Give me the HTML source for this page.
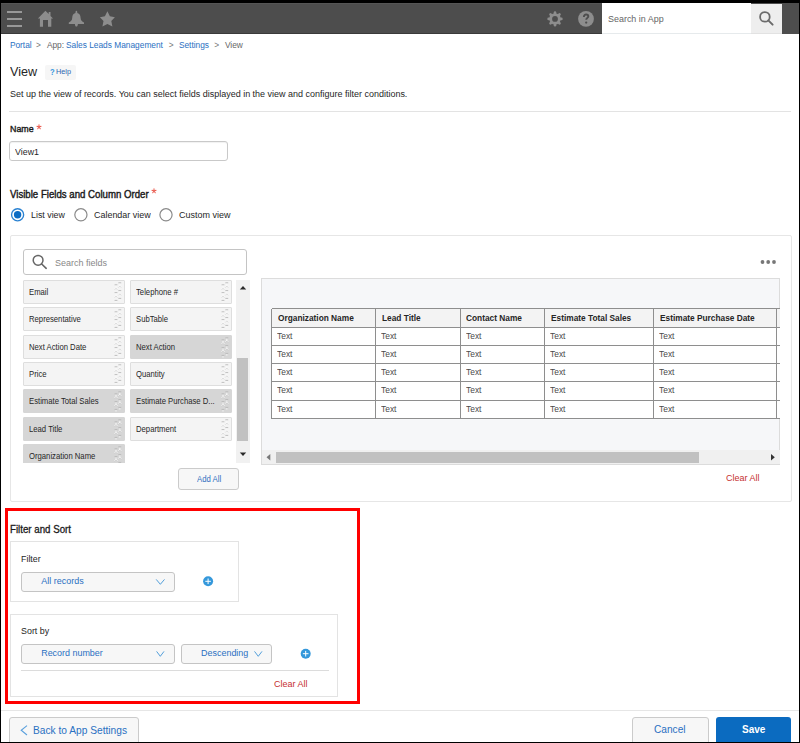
<!DOCTYPE html>
<html><head><meta charset="utf-8"><style>
html,body{margin:0;padding:0;}
body{width:800px;height:743px;position:relative;overflow:hidden;background:#fff;font-family:"Liberation Sans",sans-serif;}
.b{position:absolute;box-sizing:border-box;}
.t{position:absolute;white-space:pre;line-height:1;}
</style></head><body>
<div class="b" style="left:0px;top:0px;width:800px;height:34px;background:#4d4d4d;"></div>
<div class="b" style="left:0px;top:33px;width:602px;height:1px;background:#3a3a3a;"></div>
<div class="b" style="left:0px;top:3px;width:602px;height:1px;background:#555;"></div>
<div class="b" style="left:7px;top:11px;width:15px;height:2px;background:#989898;"></div>
<div class="b" style="left:7px;top:18px;width:15px;height:2px;background:#989898;"></div>
<div class="b" style="left:7px;top:25px;width:15px;height:2px;background:#989898;"></div>
<div class="b" style="left:602px;top:3px;width:149px;height:31px;background:#fff;"></div>
<div class="b" style="left:602px;top:33px;width:149px;height:1px;background:#e6eaec;"></div>
<div class="b" style="left:751px;top:4px;width:31px;height:30px;background:#eeeeee;"></div>
<div class="b" style="left:751px;top:33px;width:31px;height:1px;background:#e2e2e2;"></div>
<svg class="b" style="left:0;top:0" width="800" height="40" viewBox="0 0 800 40">
<path fill="#8d8d8d" d="M45.4 10.8 L37.9 18.5 L39.9 18.5 L39.9 26.8 L43 26.8 L43 19.9 L48 19.9 L48 26.8 L51.3 26.8 L51.3 18.5 L53.1 18.5 L50.5 15.9 L50.5 11.9 L48.7 11.9 L48.7 14.1 Z"/>
<path fill="#8d8d8d" d="M76.4 10.8 C77.2 10.8 77.4 11.8 77.3 13.1 C79.8 13.6 80.5 15.5 80.6 18 C80.8 20.5 82 21.6 84 22.6 L84 24 L68.8 24 L68.8 22.6 C70.8 21.6 72 20.5 72.2 18 C72.3 15.5 73 13.6 75.5 13.1 C75.4 11.8 75.6 10.8 76.4 10.8 Z M74.9 24 L77.9 24 C77.8 25.6 77.2 26.6 76.4 26.6 C75.6 26.6 75 25.6 74.9 24 Z"/>
<path fill="#8d8d8d" d="M107.4 11.2 L109.9 16.2 L114.9 17.3 L111.3 20.9 L112.4 26.4 L107.4 24.1 L102.4 26.4 L103.5 20.9 L99.9 17.3 L104.9 16.2 Z"/>
<g fill="#8d8d8d" transform="translate(555 18.9)">
<circle r="5.7"/>
<g stroke="#8d8d8d" stroke-width="2.6" stroke-linecap="round">
<line x1="0" y1="-6.4" x2="0" y2="6.4"/><line x1="-6.4" y1="0" x2="6.4" y2="0"/>
<line x1="-4.5" y1="-4.5" x2="4.5" y2="4.5"/><line x1="-4.5" y1="4.5" x2="4.5" y2="-4.5"/>
</g>
<circle r="2.9" fill="#4d4d4d"/>
</g>
<circle cx="586" cy="18.95" r="7.9" fill="#8d8d8d"/>
<path d="M583.9 16.9 C583.9 15.3 584.9 14.5 586.1 14.5 C587.4 14.5 588.3 15.3 588.3 16.4 C588.3 17.8 586.2 18 586.2 19.8" fill="none" stroke="#4d4d4d" stroke-width="1.9"/>
<circle cx="586.2" cy="22.6" r="1.15" fill="#4d4d4d"/>
<circle cx="764.9" cy="16.9" r="4.8" fill="none" stroke="#6b6b6b" stroke-width="1.8"/>
<line x1="768.3" y1="20.4" x2="772.6" y2="24.6" stroke="#6b6b6b" stroke-width="2" stroke-linecap="round"/>
</svg>
<span class="t" style="left:607.80px;top:14.08px;font-size:9.944px;color:#666;transform:scaleX(0.9);transform-origin:0 0;">Search in App</span>
<span class="t" style="left:9.90px;top:41.03px;font-size:8.350px;color:#2a70c2;">Portal</span>
<span class="t" style="left:36.00px;top:41.03px;font-size:8.350px;color:#777;">&gt;</span>
<span class="t" style="left:46.90px;top:41.03px;font-size:8.350px;color:#666;">App:</span>
<span class="t" style="left:66.00px;top:41.03px;font-size:8.350px;color:#2a70c2;">Sales Leads Management</span>
<span class="t" style="left:168.80px;top:41.03px;font-size:8.350px;color:#777;">&gt;</span>
<span class="t" style="left:178.90px;top:41.03px;font-size:8.350px;color:#2a70c2;">Settings</span>
<span class="t" style="left:214.30px;top:41.03px;font-size:8.350px;color:#777;">&gt;</span>
<span class="t" style="left:224.90px;top:41.03px;font-size:8.350px;color:#666;">View</span>
<span class="t" style="left:9.80px;top:65.15px;font-size:13.404px;color:#262626;transform:scaleX(0.94);transform-origin:0 0;">View</span>
<div class="b" style="left:45px;top:65px;width:31px;height:14.5px;background:#f6f6f6;border-radius:2px;"></div>
<span class="t" style="left:49.60px;top:68.33px;font-size:8.941px;color:#3a9ae0;font-weight:bold;transform:scaleX(0.85);transform-origin:0 0;">?</span>
<span class="t" style="left:56.00px;top:67.79px;font-size:7.684px;color:#2b65b0;transform:scaleX(0.95);transform-origin:0 0;">Help</span>
<span class="t" style="left:10.00px;top:88.98px;font-size:9.463px;color:#262626;transform:scaleX(0.95);transform-origin:0 0;">Set up the view of records. You can select fields displayed in the view and configure filter conditions.</span>
<div class="b" style="left:9px;top:111px;width:782px;height:1px;background:#e3e3e3;"></div>
<span class="t" style="left:10.10px;top:123.57px;font-size:9.833px;color:#1a1a1a;transform:scaleX(0.9);transform-origin:0 0;-webkit-text-stroke:0.4px #1a1a1a;">Name</span>
<svg class="b" style="left:35px;top:122.5px" width="8" height="8" viewBox="35 122.5 8 8"><path d="M39.00 126.50 L39.00 124.35 M39.00 126.50 L41.04 125.84 M39.00 126.50 L40.26 128.24 M39.00 126.50 L37.74 128.24 M39.00 126.50 L36.96 125.84 " stroke="#ea5a4e" stroke-width="1.05" stroke-linecap="round" fill="none"/></svg>
<div class="b" style="left:9px;top:141px;width:219px;height:20px;background:#fff;border:1px solid #c9c9c9;border-radius:3px;box-shadow:inset 0 1px 1px rgba(0,0,0,.06);"></div>
<span class="t" style="left:15.00px;top:147.03px;font-size:9.641px;color:#262626;transform:scaleX(0.92);transform-origin:0 0;">View1</span>
<span class="t" style="left:9.80px;top:189.89px;font-size:10.052px;color:#1a1a1a;transform:scaleX(0.96);transform-origin:0 0;-webkit-text-stroke:0.4px #1a1a1a;">Visible Fields and Column Order</span>
<svg class="b" style="left:149.75px;top:186.9px" width="8" height="8" viewBox="149.75 186.9 8 8"><path d="M153.75 190.90 L153.75 188.75 M153.75 190.90 L155.79 190.24 M153.75 190.90 L155.01 192.64 M153.75 190.90 L152.49 192.64 M153.75 190.90 L151.71 190.24 " stroke="#ea5a4e" stroke-width="1.05" stroke-linecap="round" fill="none"/></svg>
<svg class="b" style="left:0;top:200px" width="240" height="30" viewBox="0 200 240 30">
<circle cx="17.6" cy="214.8" r="6.05" fill="none" stroke="#2a82d2" stroke-width="1.35"/>
<circle cx="17.6" cy="214.8" r="3.7" fill="#0b6cc4"/>
<circle cx="80.9" cy="214.8" r="6.1" fill="none" stroke="#8a8a8a" stroke-width="1.2"/>
<circle cx="166" cy="214.8" r="6.1" fill="none" stroke="#8a8a8a" stroke-width="1.2"/>
</svg>
<span class="t" style="left:30.70px;top:209.73px;font-size:9.527px;color:#262626;transform:scaleX(0.93);transform-origin:0 0;">List view</span>
<span class="t" style="left:93.80px;top:209.66px;font-size:9.613px;color:#262626;transform:scaleX(0.93);transform-origin:0 0;">Calendar view</span>
<span class="t" style="left:178.90px;top:209.59px;font-size:9.688px;color:#262626;transform:scaleX(0.93);transform-origin:0 0;">Custom view</span>
<div class="b" style="left:10px;top:235px;width:782px;height:267px;border:1px solid #e6e6e6;border-radius:2px;background:#fff;"></div>
<div class="b" style="left:23px;top:249px;width:223.7px;height:25.7px;border:1px solid #c4c4c4;border-radius:3px;background:#fff;"></div>
<svg class="b" style="left:20px;top:245px" width="40" height="30" viewBox="20 245 40 30">
<circle cx="38.1" cy="260.3" r="4.9" fill="none" stroke="#666" stroke-width="1.5"/>
<line x1="41.7" y1="264" x2="46.2" y2="268.3" stroke="#666" stroke-width="1.6" stroke-linecap="round"/>
</svg>
<span class="t" style="left:55.00px;top:257.52px;font-size:9.772px;color:#888;transform:scaleX(0.92);transform-origin:0 0;">Search fields</span>
<div class="b" style="left:23px;top:280px;width:210px;height:183px;overflow:hidden">
<div class="b" style="left:0px;top:-0.40px;width:101.5px;height:24px;background:#f4f4f4;border:1px solid #dedede;border-radius:1px;"><svg width="8" height="21" viewBox="0 0 8 21" style="position:absolute;left:90px;top:1px">
<g fill="none" stroke-width="0.9">
<path stroke="#b8b8b8" d="M0.6 2.8 H3.4 M0.6 10.6 H3.4 M0.6 18.4 H3.4 M4.4 0.8 H7.2 M4.4 8.6 H7.2 M4.4 16.4 H7.2"/>
<path stroke="#fbfbfb" d="M0.6 7 L2 5.4 L3.4 7 M0.6 14.8 L2 13.2 L3.4 14.8 M4.4 4.8 L5.8 3.2 L7.2 4.8 M4.4 12.6 L5.8 11 L7.2 12.6"/>
<path stroke="#c8c8c8" d="M0.6 7.8 L2 6.2 L3.4 7.8 M0.6 15.6 L2 14 L3.4 15.6 M4.4 5.6 L5.8 4 L7.2 5.6 M4.4 13.4 L5.8 11.8 L7.2 13.4" stroke-opacity="0.6"/>
</g>
<g fill="#fbfbfb"><rect x="1.4" y="3.8" width="1.2" height="1"/><rect x="1.4" y="11.6" width="1.2" height="1"/><rect x="1.4" y="19.4" width="1.2" height="1"/>
<rect x="5.2" y="1.8" width="1.2" height="1"/><rect x="5.2" y="9.6" width="1.2" height="1"/><rect x="5.2" y="17.4" width="1.2" height="1"/></g>
</svg></div>
<div class="b" style="left:107px;top:-0.40px;width:101.5px;height:24px;background:#f4f4f4;border:1px solid #dedede;border-radius:1px;"><svg width="8" height="21" viewBox="0 0 8 21" style="position:absolute;left:90px;top:1px">
<g fill="none" stroke-width="0.9">
<path stroke="#b8b8b8" d="M0.6 2.8 H3.4 M0.6 10.6 H3.4 M0.6 18.4 H3.4 M4.4 0.8 H7.2 M4.4 8.6 H7.2 M4.4 16.4 H7.2"/>
<path stroke="#fbfbfb" d="M0.6 7 L2 5.4 L3.4 7 M0.6 14.8 L2 13.2 L3.4 14.8 M4.4 4.8 L5.8 3.2 L7.2 4.8 M4.4 12.6 L5.8 11 L7.2 12.6"/>
<path stroke="#c8c8c8" d="M0.6 7.8 L2 6.2 L3.4 7.8 M0.6 15.6 L2 14 L3.4 15.6 M4.4 5.6 L5.8 4 L7.2 5.6 M4.4 13.4 L5.8 11.8 L7.2 13.4" stroke-opacity="0.6"/>
</g>
<g fill="#fbfbfb"><rect x="1.4" y="3.8" width="1.2" height="1"/><rect x="1.4" y="11.6" width="1.2" height="1"/><rect x="1.4" y="19.4" width="1.2" height="1"/>
<rect x="5.2" y="1.8" width="1.2" height="1"/><rect x="5.2" y="9.6" width="1.2" height="1"/><rect x="5.2" y="17.4" width="1.2" height="1"/></g>
</svg></div>
<div class="b" style="left:0px;top:27.05px;width:101.5px;height:24px;background:#f4f4f4;border:1px solid #dedede;border-radius:1px;"><svg width="8" height="21" viewBox="0 0 8 21" style="position:absolute;left:90px;top:1px">
<g fill="none" stroke-width="0.9">
<path stroke="#b8b8b8" d="M0.6 2.8 H3.4 M0.6 10.6 H3.4 M0.6 18.4 H3.4 M4.4 0.8 H7.2 M4.4 8.6 H7.2 M4.4 16.4 H7.2"/>
<path stroke="#fbfbfb" d="M0.6 7 L2 5.4 L3.4 7 M0.6 14.8 L2 13.2 L3.4 14.8 M4.4 4.8 L5.8 3.2 L7.2 4.8 M4.4 12.6 L5.8 11 L7.2 12.6"/>
<path stroke="#c8c8c8" d="M0.6 7.8 L2 6.2 L3.4 7.8 M0.6 15.6 L2 14 L3.4 15.6 M4.4 5.6 L5.8 4 L7.2 5.6 M4.4 13.4 L5.8 11.8 L7.2 13.4" stroke-opacity="0.6"/>
</g>
<g fill="#fbfbfb"><rect x="1.4" y="3.8" width="1.2" height="1"/><rect x="1.4" y="11.6" width="1.2" height="1"/><rect x="1.4" y="19.4" width="1.2" height="1"/>
<rect x="5.2" y="1.8" width="1.2" height="1"/><rect x="5.2" y="9.6" width="1.2" height="1"/><rect x="5.2" y="17.4" width="1.2" height="1"/></g>
</svg></div>
<div class="b" style="left:107px;top:27.05px;width:101.5px;height:24px;background:#f4f4f4;border:1px solid #dedede;border-radius:1px;"><svg width="8" height="21" viewBox="0 0 8 21" style="position:absolute;left:90px;top:1px">
<g fill="none" stroke-width="0.9">
<path stroke="#b8b8b8" d="M0.6 2.8 H3.4 M0.6 10.6 H3.4 M0.6 18.4 H3.4 M4.4 0.8 H7.2 M4.4 8.6 H7.2 M4.4 16.4 H7.2"/>
<path stroke="#fbfbfb" d="M0.6 7 L2 5.4 L3.4 7 M0.6 14.8 L2 13.2 L3.4 14.8 M4.4 4.8 L5.8 3.2 L7.2 4.8 M4.4 12.6 L5.8 11 L7.2 12.6"/>
<path stroke="#c8c8c8" d="M0.6 7.8 L2 6.2 L3.4 7.8 M0.6 15.6 L2 14 L3.4 15.6 M4.4 5.6 L5.8 4 L7.2 5.6 M4.4 13.4 L5.8 11.8 L7.2 13.4" stroke-opacity="0.6"/>
</g>
<g fill="#fbfbfb"><rect x="1.4" y="3.8" width="1.2" height="1"/><rect x="1.4" y="11.6" width="1.2" height="1"/><rect x="1.4" y="19.4" width="1.2" height="1"/>
<rect x="5.2" y="1.8" width="1.2" height="1"/><rect x="5.2" y="9.6" width="1.2" height="1"/><rect x="5.2" y="17.4" width="1.2" height="1"/></g>
</svg></div>
<div class="b" style="left:0px;top:54.50px;width:101.5px;height:24px;background:#f4f4f4;border:1px solid #dedede;border-radius:1px;"><svg width="8" height="21" viewBox="0 0 8 21" style="position:absolute;left:90px;top:1px">
<g fill="none" stroke-width="0.9">
<path stroke="#b8b8b8" d="M0.6 2.8 H3.4 M0.6 10.6 H3.4 M0.6 18.4 H3.4 M4.4 0.8 H7.2 M4.4 8.6 H7.2 M4.4 16.4 H7.2"/>
<path stroke="#fbfbfb" d="M0.6 7 L2 5.4 L3.4 7 M0.6 14.8 L2 13.2 L3.4 14.8 M4.4 4.8 L5.8 3.2 L7.2 4.8 M4.4 12.6 L5.8 11 L7.2 12.6"/>
<path stroke="#c8c8c8" d="M0.6 7.8 L2 6.2 L3.4 7.8 M0.6 15.6 L2 14 L3.4 15.6 M4.4 5.6 L5.8 4 L7.2 5.6 M4.4 13.4 L5.8 11.8 L7.2 13.4" stroke-opacity="0.6"/>
</g>
<g fill="#fbfbfb"><rect x="1.4" y="3.8" width="1.2" height="1"/><rect x="1.4" y="11.6" width="1.2" height="1"/><rect x="1.4" y="19.4" width="1.2" height="1"/>
<rect x="5.2" y="1.8" width="1.2" height="1"/><rect x="5.2" y="9.6" width="1.2" height="1"/><rect x="5.2" y="17.4" width="1.2" height="1"/></g>
</svg></div>
<div class="b" style="left:107px;top:54.50px;width:101.5px;height:24px;background:#d6d6d6;border:1px solid #d6d6d6;border-radius:1px;"><svg width="8" height="21" viewBox="0 0 8 21" style="position:absolute;left:90px;top:1px">
<g fill="none" stroke-width="0.9">
<path stroke="#b8b8b8" d="M0.6 2.8 H3.4 M0.6 10.6 H3.4 M0.6 18.4 H3.4 M4.4 0.8 H7.2 M4.4 8.6 H7.2 M4.4 16.4 H7.2"/>
<path stroke="#fbfbfb" d="M0.6 7 L2 5.4 L3.4 7 M0.6 14.8 L2 13.2 L3.4 14.8 M4.4 4.8 L5.8 3.2 L7.2 4.8 M4.4 12.6 L5.8 11 L7.2 12.6"/>
<path stroke="#c8c8c8" d="M0.6 7.8 L2 6.2 L3.4 7.8 M0.6 15.6 L2 14 L3.4 15.6 M4.4 5.6 L5.8 4 L7.2 5.6 M4.4 13.4 L5.8 11.8 L7.2 13.4" stroke-opacity="0.6"/>
</g>
<g fill="#fbfbfb"><rect x="1.4" y="3.8" width="1.2" height="1"/><rect x="1.4" y="11.6" width="1.2" height="1"/><rect x="1.4" y="19.4" width="1.2" height="1"/>
<rect x="5.2" y="1.8" width="1.2" height="1"/><rect x="5.2" y="9.6" width="1.2" height="1"/><rect x="5.2" y="17.4" width="1.2" height="1"/></g>
</svg></div>
<div class="b" style="left:0px;top:81.95px;width:101.5px;height:24px;background:#f4f4f4;border:1px solid #dedede;border-radius:1px;"><svg width="8" height="21" viewBox="0 0 8 21" style="position:absolute;left:90px;top:1px">
<g fill="none" stroke-width="0.9">
<path stroke="#b8b8b8" d="M0.6 2.8 H3.4 M0.6 10.6 H3.4 M0.6 18.4 H3.4 M4.4 0.8 H7.2 M4.4 8.6 H7.2 M4.4 16.4 H7.2"/>
<path stroke="#fbfbfb" d="M0.6 7 L2 5.4 L3.4 7 M0.6 14.8 L2 13.2 L3.4 14.8 M4.4 4.8 L5.8 3.2 L7.2 4.8 M4.4 12.6 L5.8 11 L7.2 12.6"/>
<path stroke="#c8c8c8" d="M0.6 7.8 L2 6.2 L3.4 7.8 M0.6 15.6 L2 14 L3.4 15.6 M4.4 5.6 L5.8 4 L7.2 5.6 M4.4 13.4 L5.8 11.8 L7.2 13.4" stroke-opacity="0.6"/>
</g>
<g fill="#fbfbfb"><rect x="1.4" y="3.8" width="1.2" height="1"/><rect x="1.4" y="11.6" width="1.2" height="1"/><rect x="1.4" y="19.4" width="1.2" height="1"/>
<rect x="5.2" y="1.8" width="1.2" height="1"/><rect x="5.2" y="9.6" width="1.2" height="1"/><rect x="5.2" y="17.4" width="1.2" height="1"/></g>
</svg></div>
<div class="b" style="left:107px;top:81.95px;width:101.5px;height:24px;background:#f4f4f4;border:1px solid #dedede;border-radius:1px;"><svg width="8" height="21" viewBox="0 0 8 21" style="position:absolute;left:90px;top:1px">
<g fill="none" stroke-width="0.9">
<path stroke="#b8b8b8" d="M0.6 2.8 H3.4 M0.6 10.6 H3.4 M0.6 18.4 H3.4 M4.4 0.8 H7.2 M4.4 8.6 H7.2 M4.4 16.4 H7.2"/>
<path stroke="#fbfbfb" d="M0.6 7 L2 5.4 L3.4 7 M0.6 14.8 L2 13.2 L3.4 14.8 M4.4 4.8 L5.8 3.2 L7.2 4.8 M4.4 12.6 L5.8 11 L7.2 12.6"/>
<path stroke="#c8c8c8" d="M0.6 7.8 L2 6.2 L3.4 7.8 M0.6 15.6 L2 14 L3.4 15.6 M4.4 5.6 L5.8 4 L7.2 5.6 M4.4 13.4 L5.8 11.8 L7.2 13.4" stroke-opacity="0.6"/>
</g>
<g fill="#fbfbfb"><rect x="1.4" y="3.8" width="1.2" height="1"/><rect x="1.4" y="11.6" width="1.2" height="1"/><rect x="1.4" y="19.4" width="1.2" height="1"/>
<rect x="5.2" y="1.8" width="1.2" height="1"/><rect x="5.2" y="9.6" width="1.2" height="1"/><rect x="5.2" y="17.4" width="1.2" height="1"/></g>
</svg></div>
<div class="b" style="left:0px;top:109.40px;width:101.5px;height:24px;background:#d6d6d6;border:1px solid #d6d6d6;border-radius:1px;"><svg width="8" height="21" viewBox="0 0 8 21" style="position:absolute;left:90px;top:1px">
<g fill="none" stroke-width="0.9">
<path stroke="#b8b8b8" d="M0.6 2.8 H3.4 M0.6 10.6 H3.4 M0.6 18.4 H3.4 M4.4 0.8 H7.2 M4.4 8.6 H7.2 M4.4 16.4 H7.2"/>
<path stroke="#fbfbfb" d="M0.6 7 L2 5.4 L3.4 7 M0.6 14.8 L2 13.2 L3.4 14.8 M4.4 4.8 L5.8 3.2 L7.2 4.8 M4.4 12.6 L5.8 11 L7.2 12.6"/>
<path stroke="#c8c8c8" d="M0.6 7.8 L2 6.2 L3.4 7.8 M0.6 15.6 L2 14 L3.4 15.6 M4.4 5.6 L5.8 4 L7.2 5.6 M4.4 13.4 L5.8 11.8 L7.2 13.4" stroke-opacity="0.6"/>
</g>
<g fill="#fbfbfb"><rect x="1.4" y="3.8" width="1.2" height="1"/><rect x="1.4" y="11.6" width="1.2" height="1"/><rect x="1.4" y="19.4" width="1.2" height="1"/>
<rect x="5.2" y="1.8" width="1.2" height="1"/><rect x="5.2" y="9.6" width="1.2" height="1"/><rect x="5.2" y="17.4" width="1.2" height="1"/></g>
</svg></div>
<div class="b" style="left:107px;top:109.40px;width:101.5px;height:24px;background:#d6d6d6;border:1px solid #d6d6d6;border-radius:1px;"><svg width="8" height="21" viewBox="0 0 8 21" style="position:absolute;left:90px;top:1px">
<g fill="none" stroke-width="0.9">
<path stroke="#b8b8b8" d="M0.6 2.8 H3.4 M0.6 10.6 H3.4 M0.6 18.4 H3.4 M4.4 0.8 H7.2 M4.4 8.6 H7.2 M4.4 16.4 H7.2"/>
<path stroke="#fbfbfb" d="M0.6 7 L2 5.4 L3.4 7 M0.6 14.8 L2 13.2 L3.4 14.8 M4.4 4.8 L5.8 3.2 L7.2 4.8 M4.4 12.6 L5.8 11 L7.2 12.6"/>
<path stroke="#c8c8c8" d="M0.6 7.8 L2 6.2 L3.4 7.8 M0.6 15.6 L2 14 L3.4 15.6 M4.4 5.6 L5.8 4 L7.2 5.6 M4.4 13.4 L5.8 11.8 L7.2 13.4" stroke-opacity="0.6"/>
</g>
<g fill="#fbfbfb"><rect x="1.4" y="3.8" width="1.2" height="1"/><rect x="1.4" y="11.6" width="1.2" height="1"/><rect x="1.4" y="19.4" width="1.2" height="1"/>
<rect x="5.2" y="1.8" width="1.2" height="1"/><rect x="5.2" y="9.6" width="1.2" height="1"/><rect x="5.2" y="17.4" width="1.2" height="1"/></g>
</svg></div>
<div class="b" style="left:0px;top:136.85px;width:101.5px;height:24px;background:#d6d6d6;border:1px solid #d6d6d6;border-radius:1px;"><svg width="8" height="21" viewBox="0 0 8 21" style="position:absolute;left:90px;top:1px">
<g fill="none" stroke-width="0.9">
<path stroke="#b8b8b8" d="M0.6 2.8 H3.4 M0.6 10.6 H3.4 M0.6 18.4 H3.4 M4.4 0.8 H7.2 M4.4 8.6 H7.2 M4.4 16.4 H7.2"/>
<path stroke="#fbfbfb" d="M0.6 7 L2 5.4 L3.4 7 M0.6 14.8 L2 13.2 L3.4 14.8 M4.4 4.8 L5.8 3.2 L7.2 4.8 M4.4 12.6 L5.8 11 L7.2 12.6"/>
<path stroke="#c8c8c8" d="M0.6 7.8 L2 6.2 L3.4 7.8 M0.6 15.6 L2 14 L3.4 15.6 M4.4 5.6 L5.8 4 L7.2 5.6 M4.4 13.4 L5.8 11.8 L7.2 13.4" stroke-opacity="0.6"/>
</g>
<g fill="#fbfbfb"><rect x="1.4" y="3.8" width="1.2" height="1"/><rect x="1.4" y="11.6" width="1.2" height="1"/><rect x="1.4" y="19.4" width="1.2" height="1"/>
<rect x="5.2" y="1.8" width="1.2" height="1"/><rect x="5.2" y="9.6" width="1.2" height="1"/><rect x="5.2" y="17.4" width="1.2" height="1"/></g>
</svg></div>
<div class="b" style="left:107px;top:136.85px;width:101.5px;height:24px;background:#f4f4f4;border:1px solid #dedede;border-radius:1px;"><svg width="8" height="21" viewBox="0 0 8 21" style="position:absolute;left:90px;top:1px">
<g fill="none" stroke-width="0.9">
<path stroke="#b8b8b8" d="M0.6 2.8 H3.4 M0.6 10.6 H3.4 M0.6 18.4 H3.4 M4.4 0.8 H7.2 M4.4 8.6 H7.2 M4.4 16.4 H7.2"/>
<path stroke="#fbfbfb" d="M0.6 7 L2 5.4 L3.4 7 M0.6 14.8 L2 13.2 L3.4 14.8 M4.4 4.8 L5.8 3.2 L7.2 4.8 M4.4 12.6 L5.8 11 L7.2 12.6"/>
<path stroke="#c8c8c8" d="M0.6 7.8 L2 6.2 L3.4 7.8 M0.6 15.6 L2 14 L3.4 15.6 M4.4 5.6 L5.8 4 L7.2 5.6 M4.4 13.4 L5.8 11.8 L7.2 13.4" stroke-opacity="0.6"/>
</g>
<g fill="#fbfbfb"><rect x="1.4" y="3.8" width="1.2" height="1"/><rect x="1.4" y="11.6" width="1.2" height="1"/><rect x="1.4" y="19.4" width="1.2" height="1"/>
<rect x="5.2" y="1.8" width="1.2" height="1"/><rect x="5.2" y="9.6" width="1.2" height="1"/><rect x="5.2" y="17.4" width="1.2" height="1"/></g>
</svg></div>
<div class="b" style="left:0px;top:164.30px;width:101.5px;height:24px;background:#d6d6d6;border:1px solid #d6d6d6;border-radius:1px;"><svg width="8" height="21" viewBox="0 0 8 21" style="position:absolute;left:90px;top:1px">
<g fill="none" stroke-width="0.9">
<path stroke="#b8b8b8" d="M0.6 2.8 H3.4 M0.6 10.6 H3.4 M0.6 18.4 H3.4 M4.4 0.8 H7.2 M4.4 8.6 H7.2 M4.4 16.4 H7.2"/>
<path stroke="#fbfbfb" d="M0.6 7 L2 5.4 L3.4 7 M0.6 14.8 L2 13.2 L3.4 14.8 M4.4 4.8 L5.8 3.2 L7.2 4.8 M4.4 12.6 L5.8 11 L7.2 12.6"/>
<path stroke="#c8c8c8" d="M0.6 7.8 L2 6.2 L3.4 7.8 M0.6 15.6 L2 14 L3.4 15.6 M4.4 5.6 L5.8 4 L7.2 5.6 M4.4 13.4 L5.8 11.8 L7.2 13.4" stroke-opacity="0.6"/>
</g>
<g fill="#fbfbfb"><rect x="1.4" y="3.8" width="1.2" height="1"/><rect x="1.4" y="11.6" width="1.2" height="1"/><rect x="1.4" y="19.4" width="1.2" height="1"/>
<rect x="5.2" y="1.8" width="1.2" height="1"/><rect x="5.2" y="9.6" width="1.2" height="1"/><rect x="5.2" y="17.4" width="1.2" height="1"/></g>
</svg></div>
</div>
<span class="t" style="left:29.40px;top:287.69px;font-size:8.750px;color:#262626;transform:scaleX(0.88);transform-origin:0 0;">Email</span>
<span class="t" style="left:135.90px;top:287.69px;font-size:8.750px;color:#262626;transform:scaleX(0.88);transform-origin:0 0;">Telephone #</span>
<span class="t" style="left:29.40px;top:315.14px;font-size:8.750px;color:#262626;transform:scaleX(0.88);transform-origin:0 0;">Representative</span>
<span class="t" style="left:135.90px;top:315.14px;font-size:8.750px;color:#262626;transform:scaleX(0.88);transform-origin:0 0;">SubTable</span>
<span class="t" style="left:29.40px;top:342.59px;font-size:8.750px;color:#262626;transform:scaleX(0.88);transform-origin:0 0;">Next Action Date</span>
<span class="t" style="left:135.90px;top:342.59px;font-size:8.750px;color:#262626;transform:scaleX(0.88);transform-origin:0 0;">Next Action</span>
<span class="t" style="left:29.40px;top:370.04px;font-size:8.750px;color:#262626;transform:scaleX(0.88);transform-origin:0 0;">Price</span>
<span class="t" style="left:135.90px;top:370.04px;font-size:8.750px;color:#262626;transform:scaleX(0.88);transform-origin:0 0;">Quantity</span>
<span class="t" style="left:29.40px;top:397.49px;font-size:8.750px;color:#262626;transform:scaleX(0.88);transform-origin:0 0;">Estimate Total Sales</span>
<span class="t" style="left:135.90px;top:397.49px;font-size:8.750px;color:#262626;transform:scaleX(0.88);transform-origin:0 0;">Estimate Purchase D...</span>
<span class="t" style="left:29.40px;top:424.94px;font-size:8.750px;color:#262626;transform:scaleX(0.88);transform-origin:0 0;">Lead Title</span>
<span class="t" style="left:135.90px;top:424.94px;font-size:8.750px;color:#262626;transform:scaleX(0.88);transform-origin:0 0;">Department</span>
<span class="t" style="left:29.40px;top:452.39px;font-size:8.750px;color:#262626;transform:scaleX(0.88);transform-origin:0 0;">Organization Name</span>
<div class="b" style="left:236px;top:280px;width:13.7px;height:182.6px;background:#f1f1f1;"></div>
<div class="b" style="left:237.2px;top:358.2px;width:10.8px;height:82.5px;background:#c1c1c1;"></div>
<svg class="b" style="left:236px;top:280px" width="14" height="183" viewBox="236 280 14 183">
<path d="M239.8 289.4 L243 285.9 L246.2 289.4 Z" fill="#2a2a2a"/>
<path d="M239.8 452.4 L243 455.9 L246.2 452.4 Z" fill="#2a2a2a"/>
</svg>
<div class="b" style="left:178.2px;top:468.2px;width:61.3px;height:22.3px;background:#f7f7f7;border:1px solid #cbcbcb;border-radius:3px;"></div>
<span class="t" style="left:196.80px;top:474.65px;font-size:8.446px;color:#2f6fbf;transform:scaleX(0.92);transform-origin:0 0;">Add All</span>
<svg class="b" style="left:755px;top:255px" width="25" height="14" viewBox="755 255 25 14">
<circle cx="762.5" cy="262" r="1.9" fill="#777"/><circle cx="768.2" cy="262" r="1.9" fill="#777"/><circle cx="774" cy="262" r="1.9" fill="#777"/>
</svg>
<div class="b" style="left:260.5px;top:277.8px;width:519.7px;height:187.2px;background:#f6f7f9;border:1px solid #dcdcdc;"></div>
<div class="b" style="left:261.5px;top:278.8px;width:518px;height:186px;overflow:hidden">
<div class="b" style="left:10.100000000000023px;top:30.0px;width:608.4px;height:18.5px;background:#f3f3f3;"></div>
<div class="b" style="left:10.100000000000023px;top:48.5px;width:608.4px;height:91.0px;background:#fff;"></div>
<div class="b" style="left:10.100000000000023px;top:29.5px;width:608.4px;height:1px;background:#8e8e8e;"></div>
<div class="b" style="left:10.100000000000023px;top:48.0px;width:608.4px;height:1px;background:#8e8e8e;"></div>
<div class="b" style="left:10.100000000000023px;top:66.2px;width:608.4px;height:1px;background:#8e8e8e;"></div>
<div class="b" style="left:10.100000000000023px;top:84.4px;width:608.4px;height:1px;background:#8e8e8e;"></div>
<div class="b" style="left:10.100000000000023px;top:102.3px;width:608.4px;height:1px;background:#8e8e8e;"></div>
<div class="b" style="left:10.100000000000023px;top:120.8px;width:608.4px;height:1px;background:#8e8e8e;"></div>
<div class="b" style="left:10.100000000000023px;top:139.0px;width:608.4px;height:1px;background:#8e8e8e;"></div>
<div class="b" style="left:9.6px;top:30.0px;width:1px;height:110.0px;background:#8e8e8e;"></div>
<div class="b" style="left:113.6px;top:30.0px;width:1px;height:110.0px;background:#8e8e8e;"></div>
<div class="b" style="left:198.1px;top:30.0px;width:1px;height:110.0px;background:#8e8e8e;"></div>
<div class="b" style="left:282.6px;top:30.0px;width:1px;height:110.0px;background:#8e8e8e;"></div>
<div class="b" style="left:391.5px;top:30.0px;width:1px;height:110.0px;background:#8e8e8e;"></div>
<div class="b" style="left:514.3px;top:30.0px;width:1px;height:110.0px;background:#8e8e8e;"></div>
</div>
<span class="t" style="left:277.80px;top:313.77px;font-size:8.768px;color:#262626;font-weight:bold;transform:scaleX(0.95);transform-origin:0 0;">Organization Name</span>
<span class="t" style="left:277.20px;top:332.07px;font-size:8.895px;color:#4a4a4a;transform:scaleX(0.95);transform-origin:0 0;">Text</span>
<span class="t" style="left:277.20px;top:350.27px;font-size:8.895px;color:#4a4a4a;transform:scaleX(0.95);transform-origin:0 0;">Text</span>
<span class="t" style="left:277.20px;top:368.47px;font-size:8.895px;color:#4a4a4a;transform:scaleX(0.95);transform-origin:0 0;">Text</span>
<span class="t" style="left:277.20px;top:386.37px;font-size:8.895px;color:#4a4a4a;transform:scaleX(0.95);transform-origin:0 0;">Text</span>
<span class="t" style="left:277.20px;top:404.87px;font-size:8.895px;color:#4a4a4a;transform:scaleX(0.95);transform-origin:0 0;">Text</span>
<span class="t" style="left:381.80px;top:313.77px;font-size:8.768px;color:#262626;font-weight:bold;transform:scaleX(0.95);transform-origin:0 0;">Lead Title</span>
<span class="t" style="left:381.20px;top:332.07px;font-size:8.895px;color:#4a4a4a;transform:scaleX(0.95);transform-origin:0 0;">Text</span>
<span class="t" style="left:381.20px;top:350.27px;font-size:8.895px;color:#4a4a4a;transform:scaleX(0.95);transform-origin:0 0;">Text</span>
<span class="t" style="left:381.20px;top:368.47px;font-size:8.895px;color:#4a4a4a;transform:scaleX(0.95);transform-origin:0 0;">Text</span>
<span class="t" style="left:381.20px;top:386.37px;font-size:8.895px;color:#4a4a4a;transform:scaleX(0.95);transform-origin:0 0;">Text</span>
<span class="t" style="left:381.20px;top:404.87px;font-size:8.895px;color:#4a4a4a;transform:scaleX(0.95);transform-origin:0 0;">Text</span>
<span class="t" style="left:466.30px;top:313.77px;font-size:8.768px;color:#262626;font-weight:bold;transform:scaleX(0.95);transform-origin:0 0;">Contact Name</span>
<span class="t" style="left:465.70px;top:332.07px;font-size:8.895px;color:#4a4a4a;transform:scaleX(0.95);transform-origin:0 0;">Text</span>
<span class="t" style="left:465.70px;top:350.27px;font-size:8.895px;color:#4a4a4a;transform:scaleX(0.95);transform-origin:0 0;">Text</span>
<span class="t" style="left:465.70px;top:368.47px;font-size:8.895px;color:#4a4a4a;transform:scaleX(0.95);transform-origin:0 0;">Text</span>
<span class="t" style="left:465.70px;top:386.37px;font-size:8.895px;color:#4a4a4a;transform:scaleX(0.95);transform-origin:0 0;">Text</span>
<span class="t" style="left:465.70px;top:404.87px;font-size:8.895px;color:#4a4a4a;transform:scaleX(0.95);transform-origin:0 0;">Text</span>
<span class="t" style="left:550.80px;top:313.77px;font-size:8.768px;color:#262626;font-weight:bold;transform:scaleX(0.95);transform-origin:0 0;">Estimate Total Sales</span>
<span class="t" style="left:550.20px;top:332.07px;font-size:8.895px;color:#4a4a4a;transform:scaleX(0.95);transform-origin:0 0;">Text</span>
<span class="t" style="left:550.20px;top:350.27px;font-size:8.895px;color:#4a4a4a;transform:scaleX(0.95);transform-origin:0 0;">Text</span>
<span class="t" style="left:550.20px;top:368.47px;font-size:8.895px;color:#4a4a4a;transform:scaleX(0.95);transform-origin:0 0;">Text</span>
<span class="t" style="left:550.20px;top:386.37px;font-size:8.895px;color:#4a4a4a;transform:scaleX(0.95);transform-origin:0 0;">Text</span>
<span class="t" style="left:550.20px;top:404.87px;font-size:8.895px;color:#4a4a4a;transform:scaleX(0.95);transform-origin:0 0;">Text</span>
<span class="t" style="left:659.70px;top:313.77px;font-size:8.768px;color:#262626;font-weight:bold;transform:scaleX(0.95);transform-origin:0 0;">Estimate Purchase Date</span>
<span class="t" style="left:659.10px;top:332.07px;font-size:8.895px;color:#4a4a4a;transform:scaleX(0.95);transform-origin:0 0;">Text</span>
<span class="t" style="left:659.10px;top:350.27px;font-size:8.895px;color:#4a4a4a;transform:scaleX(0.95);transform-origin:0 0;">Text</span>
<span class="t" style="left:659.10px;top:368.47px;font-size:8.895px;color:#4a4a4a;transform:scaleX(0.95);transform-origin:0 0;">Text</span>
<span class="t" style="left:659.10px;top:386.37px;font-size:8.895px;color:#4a4a4a;transform:scaleX(0.95);transform-origin:0 0;">Text</span>
<span class="t" style="left:659.10px;top:404.87px;font-size:8.895px;color:#4a4a4a;transform:scaleX(0.95);transform-origin:0 0;">Text</span>
<div class="b" style="left:261.5px;top:450px;width:518px;height:14px;background:#f0f0f0;"></div>
<div class="b" style="left:276px;top:452px;width:423.2px;height:10.8px;background:#c1c1c1;"></div>
<svg class="b" style="left:261px;top:449px" width="520" height="16" viewBox="261 449 520 16">
<path d="M270.3 454 L266.5 457.3 L270.3 460.6 Z" fill="#777"/>
<path d="M771 454 L774.8 457.3 L771 460.6 Z" fill="#333"/>
</svg>
<span class="t" style="left:725.70px;top:473.10px;font-size:9.677px;color:#c62f2f;transform:scaleX(0.93);transform-origin:0 0;">Clear All</span>
<span class="t" style="left:9.90px;top:524.86px;font-size:10.441px;color:#1a1a1a;transform:scaleX(0.93);transform-origin:0 0;-webkit-text-stroke:0.3px #1a1a1a;">Filter and Sort</span>
<div class="b" style="left:9.5px;top:540.9px;width:229.8px;height:61.5px;border:1px solid #e3e3e3;background:#fff;"></div>
<span class="t" style="left:21.00px;top:555.29px;font-size:8.870px;color:#262626;">Filter</span>
<div class="b" style="left:20.7px;top:571.5px;width:154px;height:20.5px;background:#f7f7f7;border:1px solid #c4c4c4;border-radius:3px;"></div>
<span class="t" style="left:41.30px;top:577.09px;font-size:8.980px;color:#2a70c2;">All records</span>
<div class="b" style="left:9.75px;top:613.5px;width:327.85px;height:83.5px;border:1px solid #e3e3e3;background:#fff;"></div>
<span class="t" style="left:21.00px;top:626.56px;font-size:9.368px;color:#262626;transform:scaleX(0.95);transform-origin:0 0;">Sort by</span>
<div class="b" style="left:21px;top:643.5px;width:153.5px;height:20.5px;background:#f7f7f7;border:1px solid #c4c4c4;border-radius:3px;"></div>
<span class="t" style="left:41.20px;top:648.92px;font-size:8.950px;color:#2a70c2;">Record number</span>
<div class="b" style="left:180.6px;top:643.5px;width:91.9px;height:20.5px;background:#f7f7f7;border:1px solid #c4c4c4;border-radius:3px;"></div>
<span class="t" style="left:201.10px;top:648.92px;font-size:8.950px;color:#2a70c2;">Descending</span>
<div class="b" style="left:21px;top:670px;width:308.3px;height:1px;background:#dcdcdc;"></div>
<span class="t" style="left:273.80px;top:678.80px;font-size:9.677px;color:#c62f2f;transform:scaleX(0.93);transform-origin:0 0;">Clear All</span>
<svg class="b" style="left:0;top:560px" width="340" height="120" viewBox="0 560 340 120">
<path d="M156.2 579.4 L160.35 584.3 L164.5 579.4" fill="none" stroke="#4a9ad8" stroke-width="0.95"/>
<path d="M156.6 651.4 L160.3 656.3 L164 651.4" fill="none" stroke="#4a9ad8" stroke-width="0.95"/>
<path d="M254.5 651.4 L258.25 656.3 L262 651.4" fill="none" stroke="#4a9ad8" stroke-width="0.95"/>
<circle cx="208.1" cy="581.3" r="5" fill="#3498db"/>
<path d="M205.3 581.3 H210.9 M208.1 578.5 V584.1" stroke="#fff" stroke-width="1.0"/>
<circle cx="305.7" cy="653.7" r="5" fill="#3498db"/>
<path d="M302.9 653.7 H308.5 M305.7 650.9 V656.5" stroke="#fff" stroke-width="1.0"/>
</svg>
<div class="b" style="left:5px;top:508px;width:355px;height:196px;border:3px solid #ff0000;"></div>
<div class="b" style="left:1px;top:710px;width:798px;height:1px;background:#e6e6e6;"></div>
<div class="b" style="left:9.4px;top:716.6px;width:129.4px;height:30px;background:#f7f7f7;border:1px solid #cbcbcb;border-radius:3px;"></div>
<svg class="b" style="left:15px;top:720px" width="20" height="20" viewBox="15 720 20 20">
<path d="M27 725.6 L21.2 730.3 L27 735" fill="none" stroke="#5aa0dd" stroke-width="1.1"/>
</svg>
<span class="t" style="left:33.40px;top:725.21px;font-size:10.726px;color:#2a70c2;transform:scaleX(0.95);transform-origin:0 0;">Back to App Settings</span>
<div class="b" style="left:632.25px;top:716.5px;width:76.5px;height:30px;background:#f7f7f7;border:1px solid #cbcbcb;border-radius:3px;"></div>
<span class="t" style="left:654.40px;top:723.75px;font-size:10.684px;color:#2a70c2;transform:scaleX(0.95);transform-origin:0 0;">Cancel</span>
<div class="b" style="left:715.6px;top:716.8px;width:75.6px;height:30px;background:#0b6bc0;border-radius:3px;"></div>
<span class="t" style="left:742.00px;top:725.33px;font-size:10.000px;color:#fff;font-weight:bold;">Save</span>
<div class="b" style="left:0px;top:0px;width:800px;height:3px;background:#000;"></div>
<div class="b" style="left:0px;top:0px;width:1px;height:743px;background:#000;"></div>
<div class="b" style="left:799px;top:0px;width:1px;height:743px;background:#000;"></div>
<div class="b" style="left:0px;top:742px;width:800px;height:1px;background:#000;"></div>
</body></html>
